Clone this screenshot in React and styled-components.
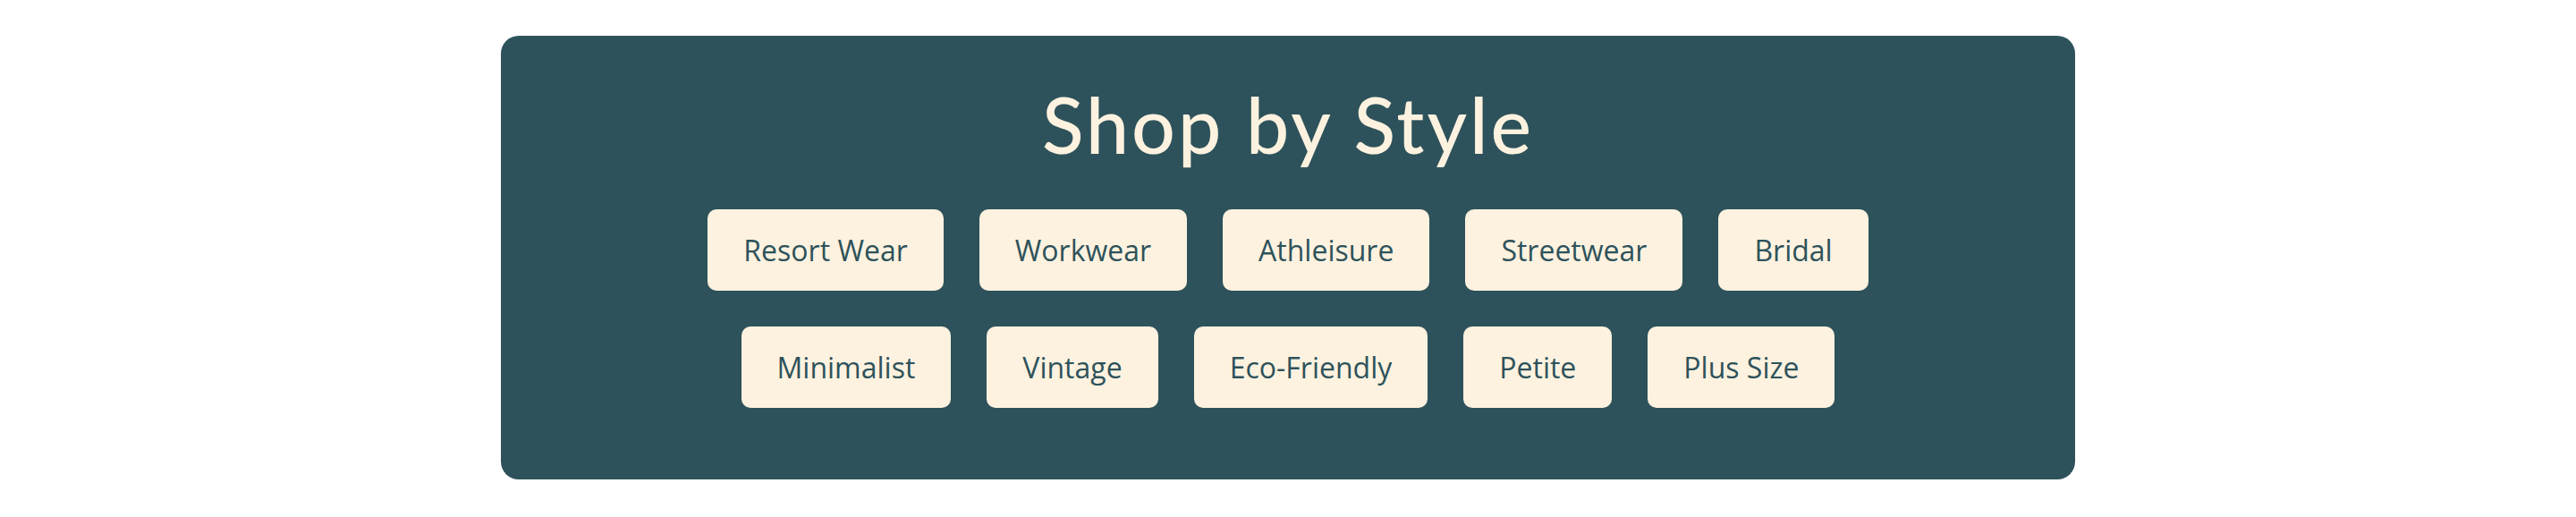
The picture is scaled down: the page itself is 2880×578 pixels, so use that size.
import React from "react";
import styled, { createGlobalStyle } from "styled-components";

const GlobalStyle = createGlobalStyle`
  html, body {
    margin: 0;
    padding: 0;
    background: #ffffff;
  }
`;

const Page = styled.div`
  padding: 40px 0;
`;

const Panel = styled.section`
  width: 1760px;
  margin: 0 auto;
  box-sizing: border-box;
  padding: 47px 40px 80px;
  background-color: #2e525b;
  border-radius: 20px;
  display: flex;
  flex-direction: column;
  align-items: center;
`;

const Title = styled.h2`
  margin: 0 0 44px;
  font-family: Lato, "Noto Sans", sans-serif;
  font-weight: 500;
  font-size: 86px;
  line-height: 1.2;
  letter-spacing: 3px;
  color: #fdf2df;
`;

const StyleList = styled.div`
  max-width: 1400px;
  display: flex;
  flex-wrap: wrap;
  justify-content: center;
  gap: 40px;
`;

const StyleButton = styled.button`
  border: none;
  border-radius: 10px;
  padding: 20px 40px;
  background-color: #fdf2df;
  color: #2e525b;
  font-family: "Open Sans", "Noto Sans", sans-serif;
  font-size: 32px;
  line-height: 51px;
  cursor: pointer;
`;

const styles = [
  "Resort Wear",
  "Workwear",
  "Athleisure",
  "Streetwear",
  "Bridal",
  "Minimalist",
  "Vintage",
  "Eco-Friendly",
  "Petite",
  "Plus Size",
];

export default function App() {
  return (
    <>
      <GlobalStyle />
      <Page>
        <Panel>
          <Title>Shop by Style</Title>
          <StyleList>
            {styles.map((name) => (
              <StyleButton key={name}>{name}</StyleButton>
            ))}
          </StyleList>
        </Panel>
      </Page>
    </>
  );
}
